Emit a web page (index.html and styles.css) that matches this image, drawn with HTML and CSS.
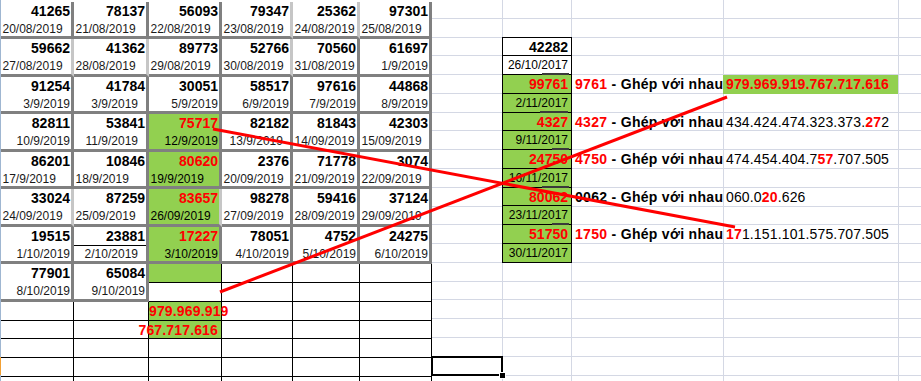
FILE: index.html
```html
<!DOCTYPE html>
<html lang="vi">
<head>
<meta charset="utf-8">
<title>Sheet</title>
<link rel="stylesheet" href="styles.css">
</head>
<body>
<div class="sheet">
  <div class="hdr"></div>
  <div class="hdr-sel"></div>

  <div class="left">
    <!-- row 1 -->
    <div class="g"><div class="n">41265</div><div class="d">20/08/2019</div></div>
    <div class="g"><div class="n">78137</div><div class="d">21/08/2019</div></div>
    <div class="g"><div class="n">56093</div><div class="d">22/08/2019</div></div>
    <div class="g lv"><div class="n">79347</div><div class="d">23/08/2019</div></div>
    <div class="g lv"><div class="n">25362</div><div class="d">24/08/2019</div></div>
    <div class="g"><div class="n">97301</div><div class="d">25/08/2019</div></div>
    <!-- row 2 -->
    <div class="g lv"><div class="n">59662</div><div class="d">27/08/2019</div></div>
    <div class="g lv"><div class="n">41362</div><div class="d">28/08/2019</div></div>
    <div class="g"><div class="n">89773</div><div class="d">29/08/2019</div></div>
    <div class="g lv"><div class="n">52766</div><div class="d">30/08/2019</div></div>
    <div class="g"><div class="n">70560</div><div class="d">31/08/2019</div></div>
    <div class="g"><div class="n">61697</div><div class="d r">1/9/2019</div></div>
    <!-- row 3 -->
    <div class="g"><div class="n">91254</div><div class="d r">3/9/2019</div></div>
    <div class="g"><div class="n">41784</div><div class="d r pr">3/9/2019</div></div>
    <div class="g"><div class="n">30051</div><div class="d r">5/9/2019</div></div>
    <div class="g"><div class="n">58517</div><div class="d r">6/9/2019</div></div>
    <div class="g"><div class="n">97616</div><div class="d r">7/9/2019</div></div>
    <div class="g"><div class="n">44868</div><div class="d r">8/9/2019</div></div>
    <!-- row 4 -->
    <div class="g"><div class="n">82811</div><div class="d r">10/9/2019</div></div>
    <div class="g"><div class="n">53841</div><div class="d r pr">11/9/2019</div></div>
    <div class="g gr"><div class="n">75717</div><div class="d r">12/9/2019</div></div>
    <div class="g"><div class="n">82182</div><div class="d c">13/9/2019</div></div>
    <div class="g"><div class="n">81843</div><div class="d">14/09/2019</div></div>
    <div class="g"><div class="n">42303</div><div class="d">15/09/2019</div></div>
    <!-- row 5 -->
    <div class="g"><div class="n">86201</div><div class="d">17/9/2019</div></div>
    <div class="g"><div class="n">10846</div><div class="d">18/9/2019</div></div>
    <div class="g gr"><div class="n">80620</div><div class="d">19/9/2019</div></div>
    <div class="g"><div class="n">2376</div><div class="d">20/09/2019</div></div>
    <div class="g"><div class="n">71778</div><div class="d">21/09/2019</div></div>
    <div class="g"><div class="n">3074</div><div class="d">22/09/2019</div></div>
    <!-- row 6 -->
    <div class="g lv"><div class="n">33024</div><div class="d">24/09/2019</div></div>
    <div class="g"><div class="n">87259</div><div class="d">25/09/2019</div></div>
    <div class="g gr lv"><div class="n">83657</div><div class="d">26/09/2019</div></div>
    <div class="g"><div class="n">98278</div><div class="d">27/09/2019</div></div>
    <div class="g"><div class="n">59416</div><div class="d">28/09/2019</div></div>
    <div class="g"><div class="n">37124</div><div class="d">29/09/2019</div></div>
    <!-- row 7 -->
    <div class="g"><div class="n">19515</div><div class="d r">1/10/2019</div></div>
    <div class="g"><div class="n ul">23881</div><div class="d r pr">2/10/2019</div></div>
    <div class="g gr"><div class="n">17227</div><div class="d r">3/10/2019</div></div>
    <div class="g"><div class="n">78051</div><div class="d r">4/10/2019</div></div>
    <div class="g"><div class="n">4752</div><div class="d r">5/10/2019</div></div>
    <div class="g"><div class="n">24275</div><div class="d r">6/10/2019</div></div>
    <!-- row 8 -->
    <div class="g"><div class="n">77901</div><div class="d r">8/10/2019</div></div>
    <div class="g"><div class="n">65084</div><div class="d r">9/10/2019</div></div>
    <div class="b gr"></div><div class="b"></div><div class="b"></div><div class="b"></div>
    <div class="b"></div><div class="b"></div><div class="b"></div><div class="b"></div>
    <!-- lower rows -->
    <div class="b"></div><div class="b"></div><div class="b gr">979.969.919</div><div class="b"></div><div class="b"></div><div class="b"></div>
    <div class="b"></div><div class="b"></div><div class="b gr ovl"><span>767.717.616</span></div><div class="b"></div><div class="b"></div><div class="b"></div>
    <div class="b"></div><div class="b"></div><div class="b"></div><div class="b"></div><div class="b"></div><div class="b"></div>
    <div class="b"></div><div class="b"></div><div class="b"></div><div class="b"></div><div class="b"></div><div class="b"></div>
    <div class="b"></div><div class="b"></div><div class="b"></div><div class="b"></div><div class="b"></div><div class="b"></div>
  </div>

  <div class="hcol">
    <div class="h hn">42282</div>
    <div class="h hd">26/10/2017</div>
    <div class="h hn gr red mk">99761</div>
    <div class="h hd gr">2/11/2017</div>
    <div class="h hn gr red mk m2">4327</div>
    <div class="h hd gr">9/11/2017</div>
    <div class="h hn gr red mk sh">24750</div>
    <div class="h hd gr">16/11/2017</div>
    <div class="h hn gr red mk">80062</div>
    <div class="h hd gr">23/11/2017</div>
    <div class="h hn gr red mk sh">51750</div>
    <div class="h hd gr">30/11/2017</div>
  </div>

  <div class="notes">
    <div class="pair">
      <div class="lbl"><span class="red">9761</span> - Ghép với nhau</div>
      <div class="val hl">979.969.919.767.717.616</div>
    </div>
    <div class="pair">
      <div class="lbl"><span class="red">4327</span> - Ghép với nhau</div>
      <div class="val">434.424.474.323.373.<b class="red">27</b>2</div>
    </div>
    <div class="pair">
      <div class="lbl"><span class="red">4750</span> - Ghép với nhau</div>
      <div class="val">474.454.404.7<b class="red">57</b>.707.505</div>
    </div>
    <div class="pair">
      <div class="lbl"><span>0062</span> - Ghép với nhau</div>
      <div class="val">060.0<b class="red">20</b>.626</div>
    </div>
    <div class="pair">
      <div class="lbl"><span class="red">1750</span> - Ghép với nhau</div>
      <div class="val"><b class="red">17</b>1.151.101.575.707.505</div>
    </div>
  </div>

  <div class="sel"></div>

  <svg class="lines" viewBox="0 0 921 381" width="921" height="381">
    <line x1="213" y1="129" x2="735" y2="227"/>
    <line x1="220" y1="292" x2="727" y2="97"/>
  </svg>
</div>
</body>
</html>
```

FILE: styles.css
```css
html, body {
  margin: 0;
  padding: 0;
  background: #fff;
}

.sheet {
  position: relative;
  width: 921px;
  height: 381px;
  overflow: hidden;
  font-family: "Liberation Sans", Arial, sans-serif;
  font-size: 14px;
  color: #000;
  display: grid;
  grid-template-columns: 1px 73px 75px 73px 71px 67px 72px 70px 70px 151px 175px 1fr;
  grid-template-rows: repeat(21, 18.78px);
  background-color: #fff;
  background-image:
    linear-gradient(to right,
      transparent 502px, #d4d8e4 502px 503px,
      transparent 503px 571px, #d4d8e4 571px 572px,
      transparent 572px 723px, #d4d8e4 723px 724px,
      transparent 724px 898px, #d4d8e4 898px 899px,
      transparent 899px),
    repeating-linear-gradient(to bottom, transparent 0 17.78px, #d4d8e4 17.78px 18.78px);
  background-size: 100% 100%, 489px 100%;
  background-position: 0 0, 432px 0;
  background-repeat: no-repeat, no-repeat;
}

/* row header edge */
.hdr {
  grid-column: 1;
  grid-row: 1 / 22;
  background: #9fb6d1;
}
.hdr-sel {
  grid-column: 1;
  grid-row: 20;
  background: #f2a034;
}

/* left table */
.left {
  grid-column: 2 / 8;
  grid-row: 1 / 22;
  margin-top: 1.5px;
  display: grid;
  grid-template-columns: 73px 75px 73px 71px 67px 72px;
  grid-template-rows: repeat(21, 18.78px);
}

.g {
  grid-row: span 2;
  background: #fff;
  border-right: 3px solid #808080;
  border-bottom: 3px solid #808080;
  white-space: nowrap;
}
.g.lv {
  border-right-color: #c6c6c6;
}
.g.gr {
  background: #92d050;
}
.g.gr .n {
  color: #ff0000;
}
.g.gr .d {
  color: #000;
}

.n {
  font-weight: bold;
  line-height: 19px;
  text-align: right;
  padding-right: 1px;
}
.n.ul {
  line-height: 18px;
  border-bottom: 1px solid #000;
}
.d {
  font-size: 12px;
  line-height: 17px;
  padding-left: 1.5px;
  padding-right: 1px;
  color: #1a1a1a;
}
.d.r {
  text-align: right;
}
.d.c {
  text-align: center;
}
.d.pr {
  padding-right: 8px;
}

.b {
  border-right: 1px solid #000;
  border-bottom: 1px solid #000;
  padding-top: 1px;
  line-height: 16.78px;
  font-weight: bold;
  color: #ff0000;
  white-space: nowrap;
  letter-spacing: 0.15px;
}
.b.gr {
  background: #92d050;
}
.b.ovl {
  display: flex;
  justify-content: flex-end;
  padding-right: 3px;
}

/* column H box */
.hcol {
  grid-column: 9;
  grid-row: 3 / 15;
  margin-top: -1px;
  border: 1px solid #000;
  border-bottom: none;
  display: flex;
  flex-direction: column;
  background: #fff;
}
.h {
  position: relative;
  height: 18.78px;
  box-sizing: border-box;
  flex: none;
  border-bottom: 1px solid #000;
  padding: 1px 3px 0 0;
  line-height: 16.78px;
  text-align: right;
  white-space: nowrap;
}
.hn {
  font-weight: bold;
}
.hd {
  font-size: 12px;
}
.h.gr {
  background: #92d050;
}
.mk::before {
  content: "";
  position: absolute;
  top: -2px;
  right: 2px;
  width: 27px;
  height: 2px;
  background: #3a3a3a;
}
.mk.m2::before {
  right: 3px;
  width: 28px;
}
.mk.sh::before {
  width: 17px;
}

.red {
  color: #ff0000;
}

/* notes in columns I and J */
.notes {
  grid-column: 10 / 12;
  grid-row: 5 / 15;
  display: flex;
  flex-direction: column;
}
.pair {
  height: 37.56px;
  flex: none;
  display: grid;
  grid-template-columns: 151px 175px;
  grid-template-rows: 18.78px;
  align-content: start;
}
.lbl {
  font-weight: bold;
  padding-left: 3px;
  line-height: 18.78px;
  letter-spacing: 0.3px;
  white-space: nowrap;
}
.val {
  padding-left: 3px;
  line-height: 18.78px;
  letter-spacing: 0.15px;
  white-space: nowrap;
}
.val.hl {
  background: #92d050;
  color: #ff0000;
  font-weight: bold;
}

/* selected cell */
.sel {
  grid-column: 8;
  grid-row: 20;
  margin: -1px;
  border: 2px solid #000;
  position: relative;
}
.sel::after {
  content: "";
  position: absolute;
  right: -5px;
  bottom: -5px;
  width: 5px;
  height: 5px;
  background: #000;
  border: 1px solid #fff;
}

/* red connector lines */
.lines {
  position: absolute;
  left: 0;
  top: 0;
  pointer-events: none;
}
.lines line {
  stroke: #ff0000;
  stroke-width: 3;
}
```
